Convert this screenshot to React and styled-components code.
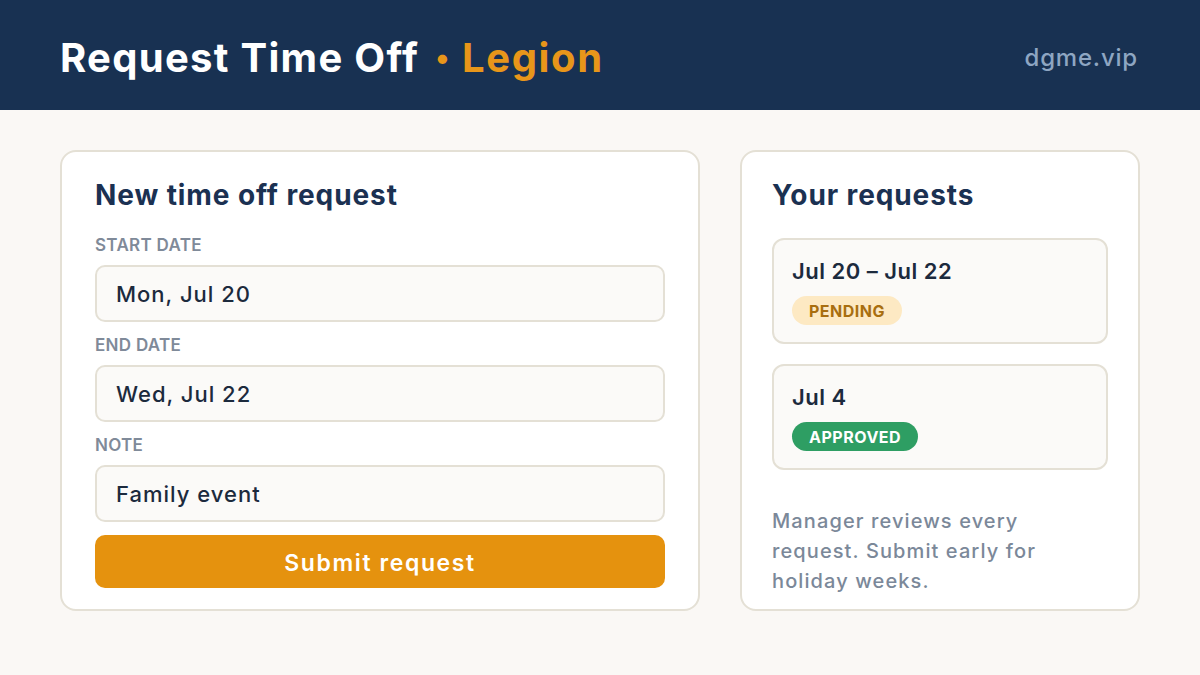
import React from 'react';
import styled, { createGlobalStyle } from 'styled-components';

const GlobalStyle = createGlobalStyle`
  html, body {
    margin: 0;
    padding: 0;
    background: #faf8f5;
    font-family: 'Inter', 'Noto Sans', sans-serif;
  }
  * { box-sizing: border-box; }
`;

const Page = styled.div`
  width: 1200px;
  height: 675px;
  background: #faf8f5;
  display: flex;
  flex-direction: column;
`;

const Header = styled.header`
  height: 110px;
  background: #183152;
  display: flex;
  align-items: center;
  justify-content: space-between;
  padding: 4px 62px 0 60px;
`;

const Title = styled.h1`
  margin: 0;
  font-size: 40px;
  font-weight: 700;
  color: #ffffff;
  letter-spacing: 1.3px;
`;

const Brand = styled.span`
  color: #e8961a;
  margin-left: 16px;
  letter-spacing: 1.6px;
`;

const Dot = styled.span`
  font-size: 30px;
  margin-right: 11px;
  vertical-align: 4px;
`;

const Site = styled.div`
  color: #8ea6c2;
  font-size: 24px;
  font-weight: 500;
  letter-spacing: 0.8px;
`;

const Main = styled.main`
  display: grid;
  grid-template-columns: 640px 400px;
  gap: 40px;
  padding: 40px 60px 0 60px;
`;

const Card = styled.section`
  background: #ffffff;
  border: 2px solid #e4e0d5;
  border-radius: 16px;
  height: 461px;
  padding: ${p => p.$pad};
  display: flex;
  flex-direction: column;
`;

const CardTitle = styled.h2`
  margin: 0 0 ${p => p.$gap || 22}px 0;
  font-size: 28px;
  font-weight: 700;
  color: #1b3152;
  line-height: 36px;
  letter-spacing: 0.9px;
`;

const Label = styled.div`
  font-size: 17px;
  font-weight: 600;
  color: #7f8a99;
  text-transform: uppercase;
  line-height: 20px;
  margin-bottom: 10px;
  letter-spacing: 0.3px;
`;

const Field = styled.div`
  height: 57px;
  border: 2px solid #e4e0d5;
  border-radius: 10px;
  background: #fbfaf8;
  display: flex;
  align-items: center;
  padding: 0 19px;
  font-size: 22px;
  font-weight: 500;
  color: #1c2a3d;
  letter-spacing: 1px;
  margin-bottom: 13px;
`;

const Submit = styled.button`
  height: 53px;
  border: none;
  border-radius: 10px;
  background: #e5920e;
  color: #ffffff;
  font-family: inherit;
  font-size: 23px;
  font-weight: 600;
  letter-spacing: 1.6px;
  width: 100%;
  padding: 2px 0 0 0;
`;

const Item = styled.div`
  border: 2px solid #e4e0d5;
  border-radius: 12px;
  background: #fbfaf8;
  height: 106px;
  padding: 17px 18px;
  margin-bottom: 20px;
  display: flex;
  flex-direction: column;
  align-items: flex-start;
  gap: 11px;
`;

const ItemDate = styled.div`
  font-size: 22px;
  font-weight: 600;
  color: #1c2a3d;
  line-height: 28px;
  letter-spacing: 0.5px;
`;

const Badge = styled.span`
  display: inline-flex;
  align-items: center;
  height: 33px;
  padding: 0 17px;
  border-radius: 17px;
  font-size: 16px;
  font-weight: 700;
  letter-spacing: 0.5px;
  background: ${p => (p.$status === 'approved' ? '#2e9e63' : '#fde9c3')};
  color: ${p => (p.$status === 'approved' ? '#ffffff' : '#a86e10')};
`;

const Note = styled.p`
  margin: 16px 0 0 0;
  max-width: 290px;
  font-size: 20px;
  font-weight: 500;
  line-height: 30px;
  letter-spacing: 1.1px;
  color: #7b8899;
`;

const requests = [
  { dates: 'Jul 20 – Jul 22', status: 'pending' },
  { dates: 'Jul 4', status: 'approved' },
];

export default function App() {
  return (
    <Page>
      <GlobalStyle />
      <Header>
        <Title>
          Request Time Off
          <Brand>
            <Dot>•</Dot>Legion
          </Brand>
        </Title>
        <Site>dgme.vip</Site>
      </Header>
      <Main>
        <Card $pad="25px 33px 0 33px">
          <CardTitle>New time off request</CardTitle>
          <Label>Start date</Label>
          <Field>Mon, Jul 20</Field>
          <Label>End date</Label>
          <Field>Wed, Jul 22</Field>
          <Label>Note</Label>
          <Field>Family event</Field>
          <Submit>Submit request</Submit>
        </Card>
        <Card $pad="25px 30px 0 30px">
          <CardTitle $gap={25}>Your requests</CardTitle>
          {requests.map(r => (
            <Item key={r.dates}>
              <ItemDate>{r.dates}</ItemDate>
              <Badge $status={r.status}>{r.status.toUpperCase()}</Badge>
            </Item>
          ))}
          <Note>Manager reviews every request. Submit early for holiday weeks.</Note>
        </Card>
      </Main>
    </Page>
  );
}
